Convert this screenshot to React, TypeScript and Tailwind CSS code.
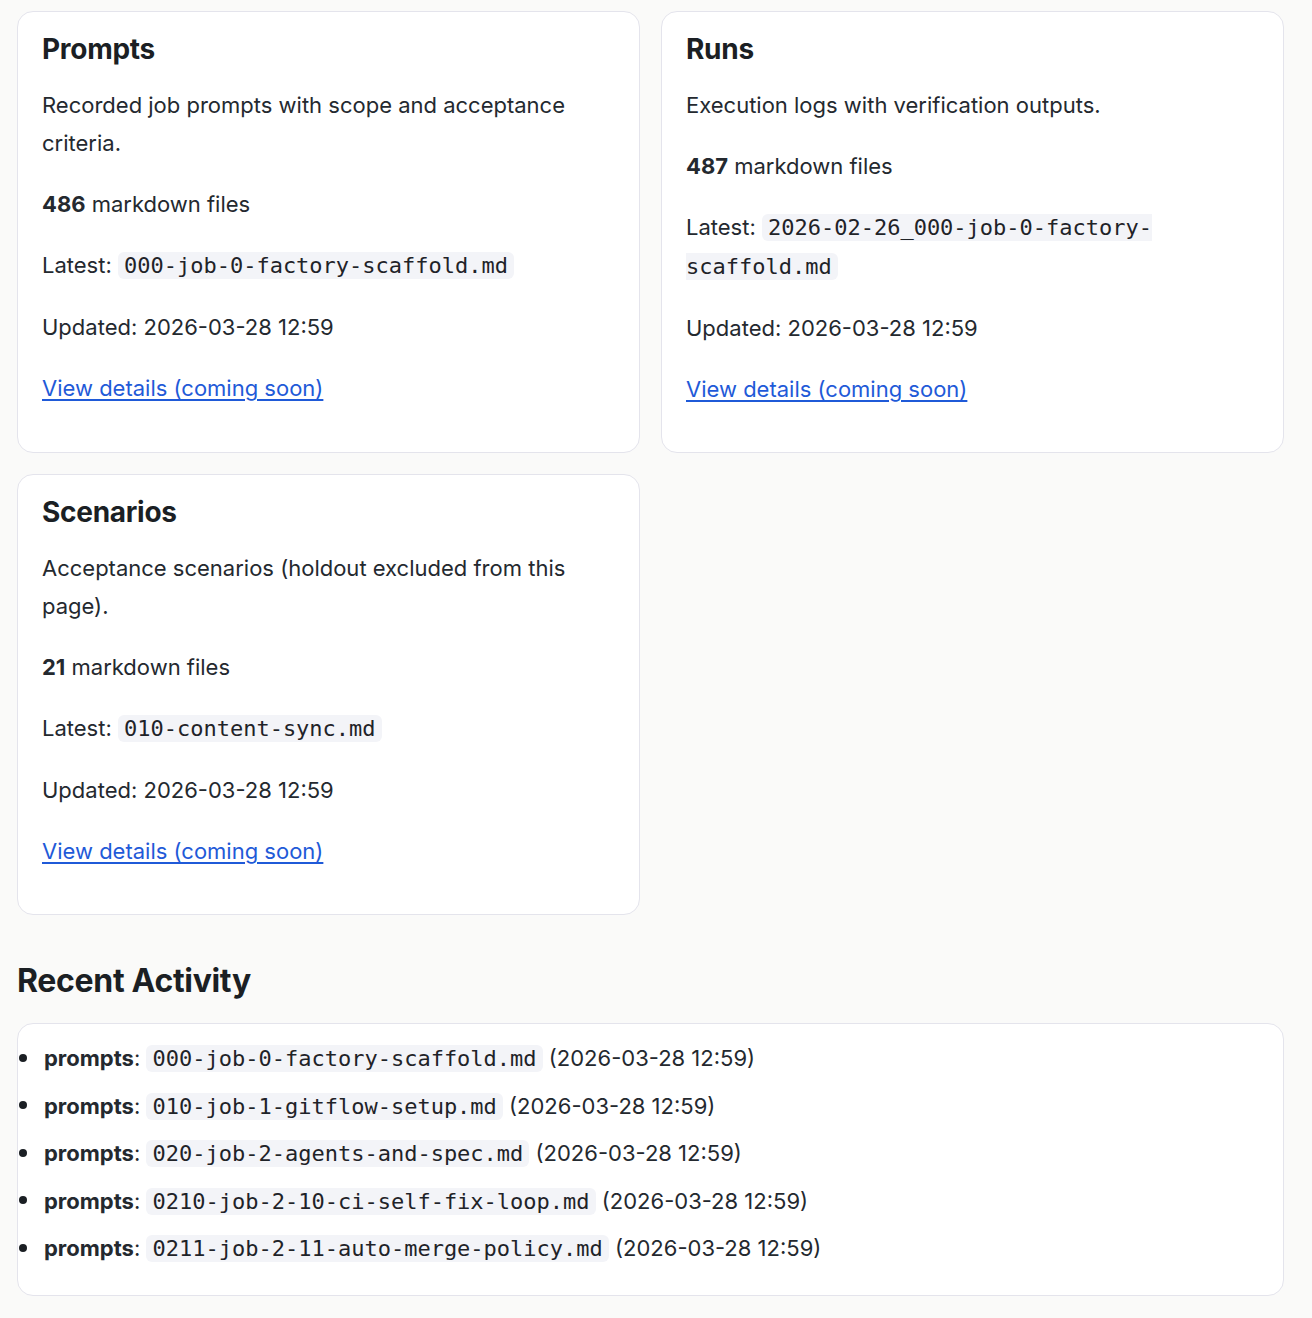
import React from "react";

type Section = {
  title: string;
  description: string;
  count: number;
  latest: string;
  updated: string;
};

const sections: Section[] = [
  {
    title: "Prompts",
    description: "Recorded job prompts with scope and acceptance criteria.",
    count: 486,
    latest: "000-job-0-factory-scaffold.md",
    updated: "2026-03-28 12:59",
  },
  {
    title: "Runs",
    description: "Execution logs with verification outputs.",
    count: 487,
    latest: "2026-02-26_000-job-0-factory-scaffold.md",
    updated: "2026-03-28 12:59",
  },
  {
    title: "Scenarios",
    description: "Acceptance scenarios (holdout excluded from this page).",
    count: 21,
    latest: "010-content-sync.md",
    updated: "2026-03-28 12:59",
  },
];

const activity = [
  "000-job-0-factory-scaffold.md",
  "010-job-1-gitflow-setup.md",
  "020-job-2-agents-and-spec.md",
  "0210-job-2-10-ci-self-fix-loop.md",
  "0211-job-2-11-auto-merge-policy.md",
];

function Code({ children }: { children: React.ReactNode }) {
  return (
    <code className="font-['DejaVu_Sans_Mono',monospace] text-[22px] bg-[#f3f4f8] rounded-[6px] px-[6px] py-[1px] text-[#1f2328]">
      {children}
    </code>
  );
}

function SectionCard({ section }: { section: Section }) {
  return (
    <div className="bg-white border border-[#e4e4ec] rounded-[16px] px-6 pt-5 pb-6">
      <h3 className="text-[28px] leading-[34px] font-bold tracking-[-0.01em] text-[#1b1f24] mb-[20px]">
        {section.title}
      </h3>
      <p className="mb-[23px]">{section.description}</p>
      <p className="mb-[23px]">
        <strong className="font-bold">{section.count}</strong> markdown files
      </p>
      <p className="mb-[23px]">
        Latest: <Code>{section.latest}</Code>
      </p>
      <p className="mb-[23px]">Updated: {section.updated}</p>
      <p className="mb-[20px]">
        <a href="#" className="text-[#1f5ad8] underline underline-offset-[3px]">
          View details (coming soon)
        </a>
      </p>
    </div>
  );
}

export default function App() {
  return (
    <div className="min-h-screen bg-[#fafaf9] font-['Inter',sans-serif] text-[22px] leading-[38px] text-[#24292f] pt-[11px] pl-[17px] pb-10">
      <div className="w-[1267px]">
        {/* Section cards */}
        <div className="grid grid-cols-2 gap-[21px]">
          {sections.map((s) => (
            <SectionCard key={s.title} section={s} />
          ))}
        </div>

        {/* Recent Activity */}
        <h2 className="text-[32px] leading-[38px] font-bold tracking-[-0.01em] text-[#1b1f24] mt-[47px] mb-[23px]">
          Recent Activity
        </h2>
        <div className="bg-white border border-[#e4e4ec] rounded-[16px] pt-[15px] pb-[18px]">
          <ul>
            {activity.map((file) => (
              <li key={file} className="flex items-center mb-[8.5px] whitespace-nowrap">
                <span className="w-[8px] h-[8px] rounded-full bg-[#1b1f24] ml-[1px] mr-[17px] -mt-[2px]" />
                <span>
                  <strong className="font-bold">prompts</strong>: <Code>{file}</Code>{" "}
                  (2026-03-28 12:59)
                </span>
              </li>
            ))}
          </ul>
        </div>
      </div>
    </div>
  );
}
